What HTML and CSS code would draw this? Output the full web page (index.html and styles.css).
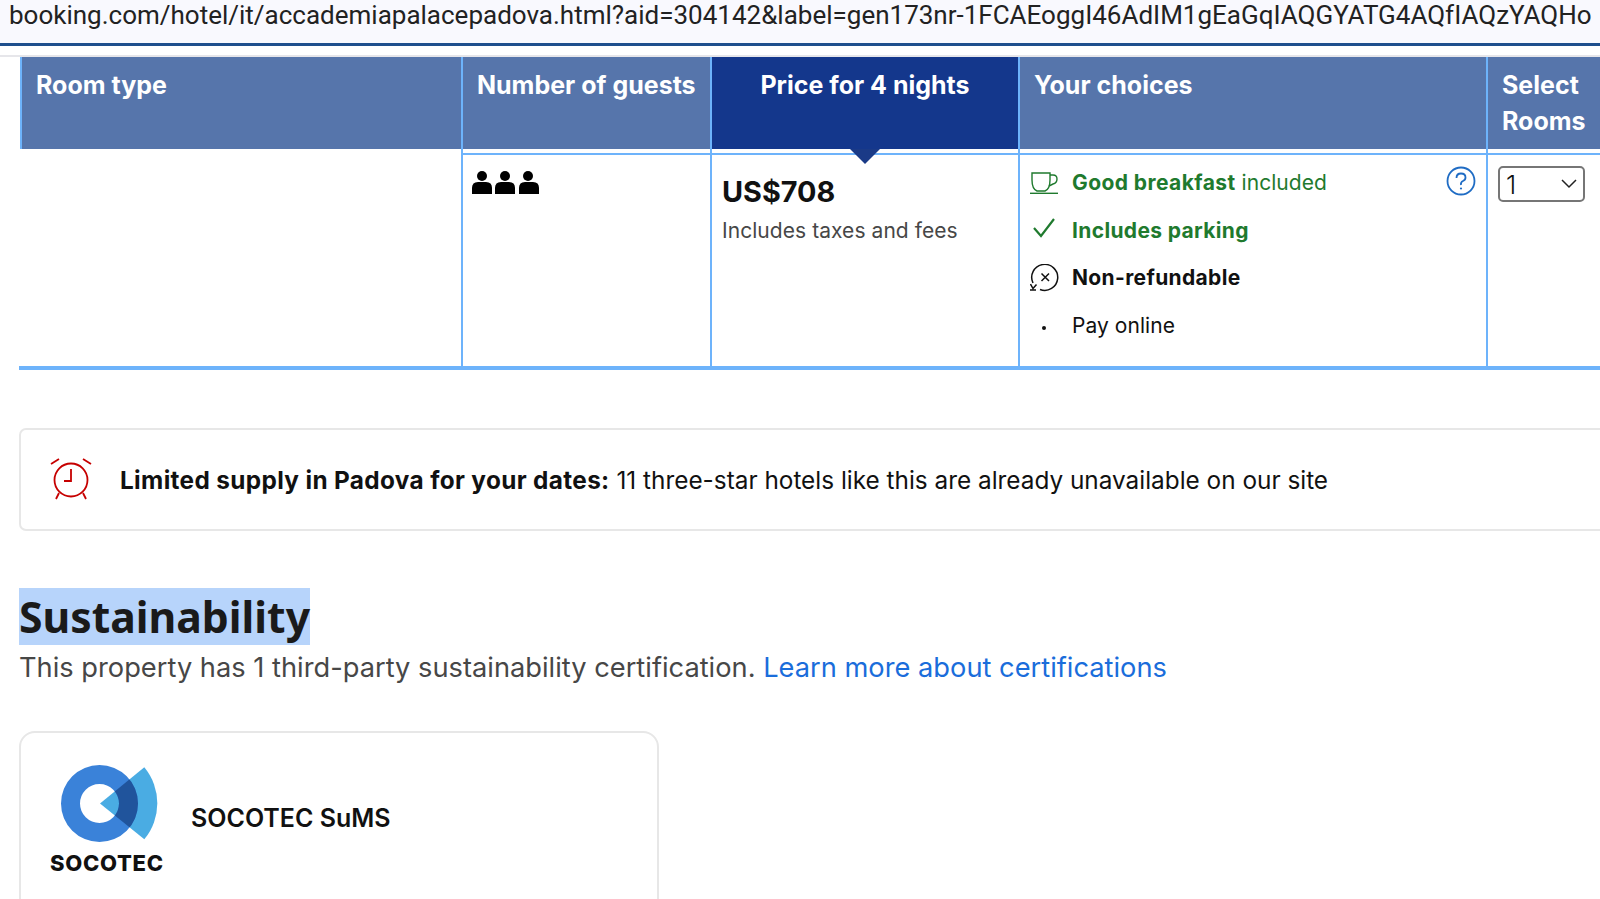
FILE: index.html
```html
<!DOCTYPE html>
<html lang="en">
<head>
<meta charset="utf-8">
<title>Accademia Palace Padova</title>
<link rel="stylesheet" href="styles.css">
</head>
<body>
<header class="urlbar"><span class="url">booking.com/hotel/it/accademiapalacepadova.html?aid=304142&amp;label=gen173nr-1FCAEoggI46AdIM1gEaGqIAQGYATG4AQfIAQzYAQHo</span></header>
<div class="subbar"></div>
<main class="page">
  <section class="rooms">
    <div class="rooms-head">
      <div class="th">Room type</div>
      <div class="th">Number of guests</div>
      <div class="th th-price">Price for 4 nights</div>
      <div class="th">Your choices</div>
      <div class="th th-select">Select Rooms</div>
    </div>
    <div class="rooms-body">
      <div class="td-room"></div>
      <div class="td"><div class="td-in td-guests">
        <svg class="guests" width="67" height="23" viewBox="0 0 67 23"><circle cx="10" cy="5" r="5"/><path d="M0 23v-6q0-6 6-6h8q6 0 6 6v6z"/><circle cx="33" cy="5" r="5"/><path d="M23 23v-6q0-6 6-6h8q6 0 6 6v6z"/><circle cx="56" cy="5" r="5"/><path d="M47 23v-6q0-6 6-6h8q6 0 6 6v6z"/></svg>
      </div></div>
      <div class="td td-arrow"><div class="td-in td-price">
        <div class="price">US$708</div>
        <div class="taxes">Includes taxes and fees</div>
      </div></div>
      <div class="td"><div class="td-in td-choices">
        <div class="choice green"><svg class="ci" width="30" height="22" viewBox="0 0 30 22" fill="none" stroke="#1f7a2e" stroke-width="1.4"><path d="M2 1h18v7q0 9-5 11H7Q2 17 2 8z"/><path d="M20 3h3q4 0 4 4t-4 5l-4 2"/><path d="M0 21.3h28"/></svg><span class="reg"><b>Good breakfast</b> included</span></div>
        <div class="choice green"><svg class="ci ci-check" width="30" height="24" viewBox="0 0 30 24" fill="none" stroke="#1f7a2e" stroke-width="2.200"><path d="M4 12l7 8L24 3"/></svg><b>Includes parking</b></div>
        <div class="choice"><svg class="ci" width="30" height="28" viewBox="0 0 30 28" fill="none" stroke="#111" stroke-width="1.500"><path d="M3 19A13 13 0 1 1 10 25.500"/><path d="M0.500 20l2.500 4.500 3.500-4M0 26H6"/><path d="M11.500 9.500l7.500 7.500M19 9.500l-7.500 7.500"/></svg><b>Non-refundable</b></div>
        <div class="choice"><span class="ci ci-dot"><i class="dot"></i></span><span class="reg">Pay online</span></div>
        <svg class="help" width="30" height="30" viewBox="0 0 30 30" fill="none" stroke="#1f6cc4" stroke-width="1.800"><circle cx="15" cy="15" r="13.500"/><path d="M10.500 12q0-4.500 4.500-4.500t4.500 4q0 2.500-2.500 3.500t-2 4"/><circle cx="15" cy="22.500" r="1.100" fill="#1f6cc4" stroke="none"/></svg>
      </div></div>
      <div class="td"><div class="td-in td-select">
        <div class="select"><span>1</span><svg width="16" height="10" viewBox="0 0 16 10" fill="none" stroke="#222" stroke-width="1.500"><path d="M1 1l7 7 7-7"/></svg></div>
      </div></div>
    </div>
  </section>

  <section class="notice">
    <svg class="alarm" width="42" height="44" viewBox="0 0 42 44" fill="none" stroke="#c60000" stroke-width="1.800"><circle cx="21" cy="24" r="16.500"/><path d="M21 13v12h-7M1 8l8-5M41 8l-8-5M9 37l-3 6M33 37l3 6"/></svg>
    <p class="notice-text"><b>Limited supply in Padova for your dates:</b> 11 three-star hotels like this are already unavailable on our site</p>
  </section>

  <h2 class="title"><span class="hl">Sustainability</span></h2>
  <p class="sub">This property has 1 third-party sustainability certification. <a href="#" class="link">Learn more about certifications</a></p>

  <section class="cert">
    <div class="logo">
      <svg width="100" height="78" viewBox="60 765 100 78">
        <defs><clipPath id="wedge"><path d="M100 803.500L144.300 767.300A56.300 56.300 0 0 1 144.300 839.300Z"/></clipPath></defs>
        <path d="M100 803.500L144.300 767.300A56.300 56.300 0 0 1 144.300 839.300Z" fill="#4aace3"/>
        <path fill-rule="evenodd" fill="#3a82d9" d="M61 803.500a38.500 38.500 0 1 0 77 0a38.500 38.500 0 1 0-77 0zM80 803.500a19.500 19.500 0 1 1 39 0a19.500 19.500 0 1 1-39 0z"/>
        <path clip-path="url(#wedge)" fill-rule="evenodd" fill="#20549c" d="M61 803.500a38.500 38.500 0 1 0 77 0a38.500 38.500 0 1 0-77 0zM80 803.500a19.500 19.500 0 1 1 39 0a19.500 19.500 0 1 1-39 0z"/>
      </svg>
      <span class="logo-word">SOCOTEC</span>
    </div>
    <div class="cert-name">SOCOTEC SuMS</div>
  </section>
</main>
</body>
</html>
```
FILE: styles.css
```css
* { box-sizing: border-box; }
html, body { margin: 0; padding: 0; height: 899px; overflow: hidden; background: #fff; }
body { font-family: Inter, "Liberation Sans", sans-serif; color: #111; width: 1600px; }

.urlbar { height: 46px; background: #f9f9fe; border-bottom: 3px solid #1e4f8d; padding-left: 9px; overflow: hidden; white-space: nowrap; }
.url { font-family: Roboto, "Liberation Sans", sans-serif; font-size: 26px; line-height: 30px; color: #222; }
.subbar { height: 11px; background: #fff; border-bottom: 2px solid #e6e6ea; }

.page { width: 1640px; padding-left: 19px; }
.rooms { width: 1581px; }
.rooms-head { display: grid; grid-template-columns: 441px 249px 308px 468px 115px; margin-left: 1px; height: 92px; }
.th { background: #5675ab; color: #fff; font-weight: 700; font-size: 25px; line-height: 36px; padding: 10px 14px; border-left: 2px solid #6db3fb; }
.th-price { background: #14378c; text-align: center; border-left-color: #6db3fb; }
.th-select { padding-right: 4px; }

.rooms-body { display: grid; grid-template-columns: 442px 249px 308px 468px 114px; height: 221px; border-bottom: 4px solid #6db3fb; }
.td { border-left: 2px solid #6db3fb; padding-top: 4px; position: relative; }
.td-in { border-top: 2px solid #6db3fb; height: 100%; position: relative; }
.td-arrow::after { content: ""; position: absolute; left: 138px; top: 0; border: 15px solid transparent; border-top-color: #1a3a87; border-bottom: 0; }

.td-guests { padding: 16px 0 0 9px; }
.guests { display: block; fill: #000; }
.td-price { padding: 19px 0 0 10px; }
.price { font-size: 28.800px; font-weight: 700; line-height: 36px; }
.taxes { font-size: 21px; line-height: 26px; color: #474747; margin-top: 8px; letter-spacing: .06px; }

.td-choices { padding: 4px 0 0 10px; }
.choice { display: flex; align-items: center; height: 47.500px; font-size: 21px; letter-spacing: .35px; }
.choice b { font-weight: 700; }
.reg { letter-spacing: .05px; }
.reg b { letter-spacing: .42px; }
.green { color: #1f7a2e; }
.ci { flex: none; width: 30px; margin-right: 12px; display: block; }
.ci-check { margin-top: -4px; }
.ci-dot { display: flex; justify-content: center; }
.dot { width: 4px; height: 4px; border-radius: 50%; background: #111; margin-top: 6px; margin-left: -2px; }
.help { position: absolute; top: 11px; right: 10px; }

.td-select { padding: 11px 0 0 10px; }
.select { width: 87px; height: 36px; border: 2px solid #767676; border-radius: 5px; display: flex; align-items: center; justify-content: space-between; padding: 0 6px 0 6px; font-size: 26px; font-weight: 300; }

.notice { margin-top: 58px; width: 1620px; height: 103px; border: 2px solid #e7e7e7; border-radius: 7px; display: flex; align-items: center; padding-left: 29px; }
.alarm { flex: none; margin: -3px 28px 0 0; }
.notice-text { margin: 0; font-size: 24.350px; }
.notice-text b { font-weight: 700; letter-spacing: .35px; }

.title { margin: 57px 0 0; font-family: "Noto Sans", sans-serif; font-size: 42.700px; font-weight: 700; line-height: 57px; color: #1a1a1a; }
.hl { background: #b7d4fb; display: inline-block; }
.sub { margin: 3px 0 0; font-size: 27.250px; line-height: 40px; color: #474747; }
.link { color: #1a6ddb; text-decoration: none; }

.cert { margin-top: 43px; width: 640px; height: 220px; border: 2px solid #e7e7e7; border-radius: 16px; display: flex; align-items: flex-start; padding: 32px 0 0 29px; }
.logo { width: 115px; display: flex; flex-direction: column; align-items: flex-start; }
.logo svg { display: block; margin-left: 10px; }
.logo-word { font-family: Inter, sans-serif; font-weight: 800; font-size: 22px; line-height: 26px; margin-top: 7px; color: #111; white-space: nowrap; letter-spacing: .7px; }
.cert-name { font-size: 25px; font-weight: 600; margin: 38px 0 0 26px; line-height: 30px; }
```
